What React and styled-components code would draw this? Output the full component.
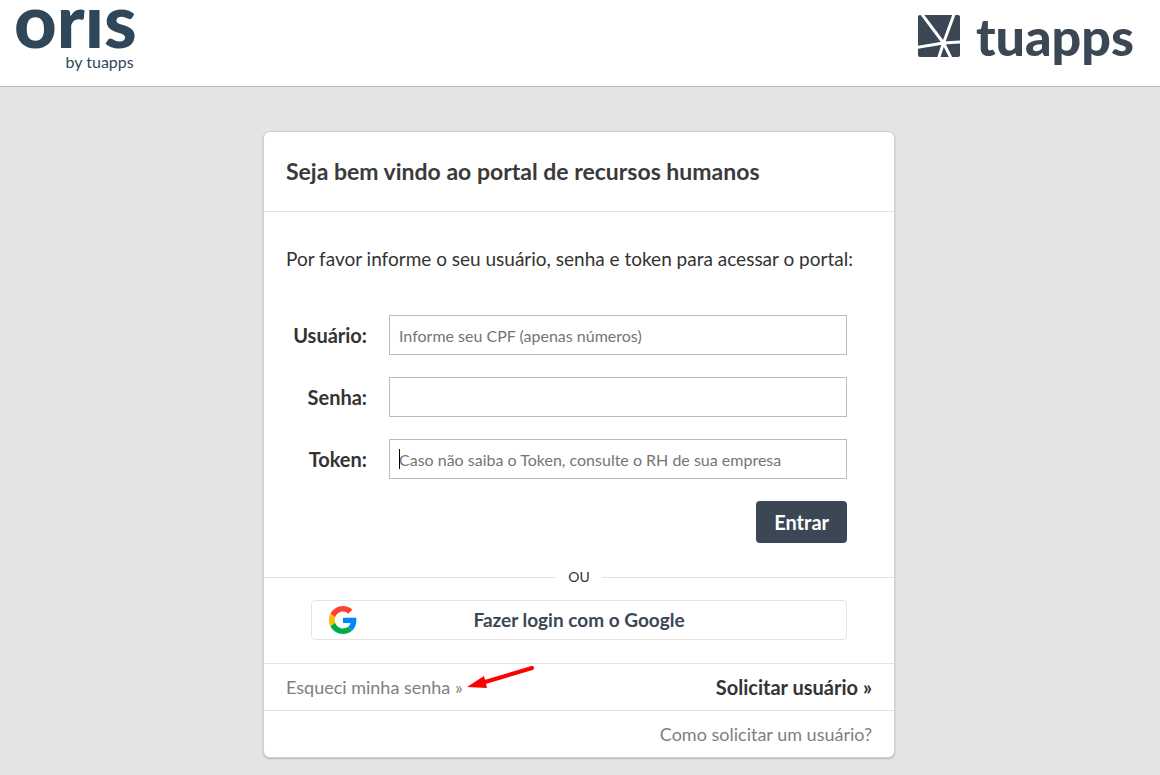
import React from "react";
import styled, { createGlobalStyle, css } from "styled-components";

const ink = "#3b4754";

const GlobalStyle = createGlobalStyle`
  *, *::before, *::after { box-sizing: border-box; }
  body {
    margin: 0;
    min-height: 100vh;
    background: #e4e4e4;
    color: #333;
    font-family: Lato, "Liberation Sans", sans-serif;
    font-size: 18px;
    line-height: 24px;
  }
  button, input { font: inherit; }
  h1, p { margin: 0; }
`;

const Header = styled.header`
  display: flex;
  justify-content: space-between;
  align-items: flex-start;
  height: 87px;
  padding: 8px 26px 0 14px;
  background: #fff;
  border-bottom: 1px solid #bbb;
`;

const OrisLogo = styled.div`
  display: flex;
  flex-direction: column;
  align-items: flex-end;
  color: #30475a;
`;

const OrisName = styled.span`
  height: 44px;
  font-size: 74px;
  font-weight: 900;
  line-height: 24px;
`;

const OrisByline = styled.span`
  padding-right: 3px;
  font-size: 16px;
  line-height: 20px;
`;

const TuappsLogo = styled.div`
  display: flex;
  gap: 16px;
  padding-top: 7px;
  color: ${ink};
`;

const TuappsName = styled.span`
  font-size: 52px;
  font-weight: 900;
  line-height: 42px;
`;

const Main = styled.main`
  padding: 44px 18px 16px 16px;
`;

const Card = styled.section`
  max-width: 632px;
  margin: 0 auto;
  background: #fff;
  border: 1px solid #d0d0d0;
  border-radius: 7px;
  box-shadow: 0 1px 2px rgba(0, 0, 0, 0.2);
`;

const CardHeader = styled.div`
  padding: 24px 22px;
  border-bottom: 1px solid #e4e4e4;
`;

const Title = styled.h1`
  color: #3a3a3a;
  font-size: 23px;
  font-weight: 700;
  line-height: 31px;
`;

const Intro = styled.p`
  padding: 35px 22px 44px;
  font-size: 19px;
`;

const Form = styled.form`
  display: grid;
  grid-template-columns: 81px 1fr;
  gap: 22px;
  align-items: center;
  padding: 0 47px 0 22px;
`;

const Label = styled.label`
  font-size: 20px;
  font-weight: 700;
  text-align: right;
`;

const Field = styled.div`
  position: relative;
  ${({ $caret }) => $caret && css`
    &::after {
      content: "";
      position: absolute;
      top: 10px;
      left: 10px;
      width: 1px;
      height: 20px;
      background: #000;
    }
  `}
`;

const Input = styled.input`
  display: block;
  width: 100%;
  height: 40px;
  padding: 0 9px;
  border: 1px solid #bbb;
  border-radius: 0;
  background: #fff;
  font-size: 16px;
  outline: none;
  &::placeholder { color: #757575; opacity: 1; }
`;

const SubmitButton = styled.button`
  grid-column: 2;
  justify-self: end;
  height: 42px;
  padding: 0 18px;
  border: 0;
  border-radius: 4px;
  background: ${ink};
  color: #fff;
  font-size: 20px;
  font-weight: 700;
`;

const Divider = styled.div`
  display: flex;
  align-items: center;
  gap: 12px;
  padding: 24px 0 13px;
  font-size: 14px;
  line-height: 20px;
  &::before, &::after {
    content: "";
    flex: 1;
    border-top: 1px solid #e4e4e4;
  }
`;

const GoogleButton = styled.button`
  display: grid;
  grid-template-columns: 28px 1fr 28px;
  align-items: center;
  width: calc(100% - 94px);
  height: 40px;
  margin: 0 47px 23px;
  padding: 0 17px;
  border: 1px solid #e4e4e4;
  border-radius: 4px;
  background: #fff;
  color: ${ink};
  font-size: 19px;
  font-weight: 700;
`;

const FooterRow = styled.div`
  display: flex;
  align-items: center;
  justify-content: space-between;
  min-height: 47px;
  padding: 0 22px;
  border-top: 1px solid #e4e4e4;
`;

const FooterLink = styled.a`
  position: relative;
  margin-left: ${({ $end }) => ($end ? "auto" : "0")};
  color: ${({ $strong }) => ($strong ? "#333" : "#808080")};
  font-size: ${({ $strong }) => ($strong ? "20px" : "18px")};
  font-weight: ${({ $strong }) => ($strong ? 700 : 400)};
  text-decoration: none;
`;

const Arrow = styled.svg`
  position: absolute;
  left: 100%;
  top: -10px;
  margin-left: 4px;
`;

function TuappsMark() {
  return (
    <svg width="42" height="42" viewBox="0 0 42 42" aria-hidden="true">
      <rect width="42" height="42" rx="2" fill={ink} />
      <g stroke="#fff" strokeWidth="3" fill="none">
        <path d="M3 -2 25.5 28M36.5 -2 25.5 28M-1 32.5 25.5 28 43 27M25.5 28 20 45M25.5 28 34 45" />
      </g>
      <circle cx="25.5" cy="28" r="3" fill="#fff" />
    </svg>
  );
}

function GoogleMark() {
  return (
    <svg width="28" height="28" viewBox="0 0 48 48" aria-hidden="true">
      <path fill="#ff4131" d="M24 9.5c3.54 0 6.71 1.22 9.21 3.6l6.85-6.85C35.9 2.38 30.47 0 24 0 14.62 0 6.51 5.38 2.56 13.22l7.98 6.19C12.43 13.72 17.74 9.5 24 9.5z" />
      <path fill="#0086ff" d="M46.98 24.55c0-1.57-.15-3.09-.38-4.55H24v9.02h12.94c-.58 2.96-2.26 5.48-4.78 7.18l7.73 6c4.51-4.18 7.09-10.36 7.09-17.65z" />
      <path fill="#ffbb00" d="M10.53 28.59c-.48-1.45-.76-2.99-.76-4.59s.27-3.14.76-4.59l-7.98-6.19C.92 16.46 0 20.12 0 24c0 3.88.92 7.54 2.56 10.78l7.97-6.19z" />
      <path fill="#00ac47" d="M24 48c6.48 0 11.93-2.13 15.89-5.81l-7.73-6c-2.15 1.45-4.92 2.3-8.16 2.3-6.26 0-11.57-4.22-13.47-9.91l-7.98 6.19C6.51 42.62 14.62 48 24 48z" />
    </svg>
  );
}

export default function App() {
  return (
    <>
      <GlobalStyle />
      <Header>
        <OrisLogo>
          <OrisName>orıs</OrisName>
          <OrisByline>by tuapps</OrisByline>
        </OrisLogo>
        <TuappsLogo>
          <TuappsMark />
          <TuappsName>tuapps</TuappsName>
        </TuappsLogo>
      </Header>
      <Main>
        <Card>
          <CardHeader>
            <Title>Seja bem vindo ao portal de recursos humanos</Title>
          </CardHeader>
          <Intro>Por favor informe o seu usuário, senha e token para acessar o portal:</Intro>
          <Form onSubmit={(e) => e.preventDefault()}>
            <Label htmlFor="usuario">Usuário:</Label>
            <Field>
              <Input id="usuario" type="text" placeholder="Informe seu CPF (apenas números)" />
            </Field>
            <Label htmlFor="senha">Senha:</Label>
            <Field>
              <Input id="senha" type="password" />
            </Field>
            <Label htmlFor="token">Token:</Label>
            <Field $caret>
              <Input id="token" type="text" placeholder="Caso não saiba o Token, consulte o RH de sua empresa" />
            </Field>
            <SubmitButton type="submit">Entrar</SubmitButton>
          </Form>
          <Divider>OU</Divider>
          <GoogleButton type="button">
            <GoogleMark />
            <span>Fazer login com o Google</span>
          </GoogleButton>
          <FooterRow>
            <FooterLink href="#esqueci">
              Esqueci minha senha »
              <Arrow width="68" height="24" viewBox="0 0 68 24" aria-hidden="true">
                <path d="M65 3 18 17" stroke="#f00" strokeWidth="4" strokeLinecap="round" />
                <path d="M0 22 17 11 20 23z" fill="#f00" />
              </Arrow>
            </FooterLink>
            <FooterLink href="#solicitar" $strong>Solicitar usuário »</FooterLink>
          </FooterRow>
          <FooterRow>
            <FooterLink href="#como" $end>Como solicitar um usuário?</FooterLink>
          </FooterRow>
        </Card>
      </Main>
    </>
  );
}
